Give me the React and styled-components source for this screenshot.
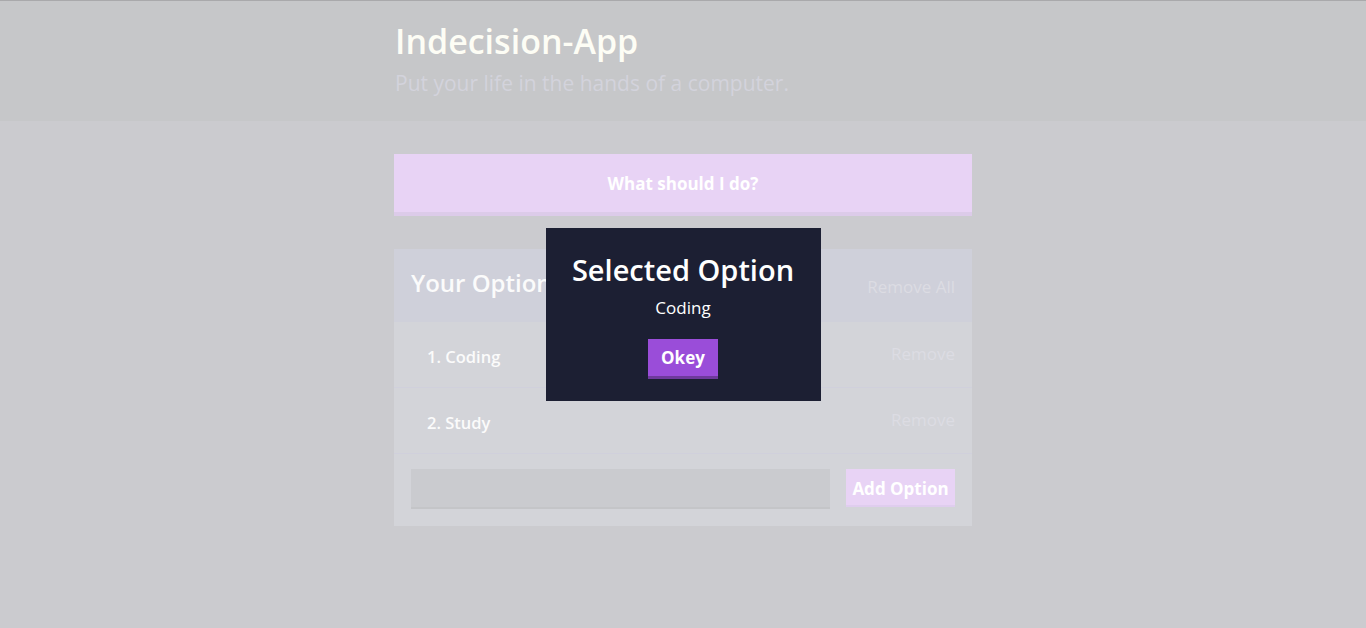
import React from "react";
import styled, { createGlobalStyle } from "styled-components";

const GlobalStyle = createGlobalStyle`
  html, body {
    margin: 0;
    padding: 0;
  }
  body {
    font-family: "Open Sans", "Noto Sans", sans-serif;
    background: #cbcbcf;
    border-top: 1px solid #a9a9ab;
  }
`;

const Page = styled.div`
  min-height: calc(100vh - 1px);
  background: #cbcbcf;
`;

const Container = styled.div`
  width: 578px;
  margin: 0 auto;
`;

const Header = styled.header`
  background: #c6c7c9;
  padding: 20px 0 25px;
`;

const Title = styled.h1`
  margin: 0 0 10px;
  font-size: 34px;
  line-height: 40px;
  font-weight: 600;
  color: #fdfdf5;
  padding-left: 1px;
`;

const Subtitle = styled.h2`
  margin: 0;
  font-size: 21px;
  line-height: 25px;
  font-weight: 500;
  color: #d3d3dc;
  padding-left: 1px;
`;

const Main = styled.main`
  padding-top: 33px;
`;

const BigButton = styled.button`
  display: block;
  width: 100%;
  height: 62px;
  margin-bottom: 33px;
  border: none;
  border-bottom: 4px solid #dccbe9;
  background: #e8d3f5;
  color: #ffffff;
  font-family: inherit;
  font-size: 17px;
  font-weight: 700;
`;

const Widget = styled.section`
  background: #d3d4d9;
`;

const WidgetHeader = styled.div`
  display: flex;
  align-items: center;
  justify-content: space-between;
  height: 73px;
  padding: 0 17px;
  background: #cfd0da;
`;

const WidgetTitle = styled.h3`
  margin: 0 0 6px;
  font-size: 24px;
  font-weight: 600;
  color: #fbfbfb;
`;

const LinkButton = styled.button`
  border: none;
  background: none;
  padding: 0;
  font-family: inherit;
  font-size: 17px;
  color: #dcdce3;
  margin-top: ${(p) => p.offset || 0}px;
`;

const OptionRow = styled.div`
  display: flex;
  align-items: center;
  justify-content: space-between;
  height: 65px;
  padding: 0 17px 0 33px;
  border-bottom: 1px solid #d0d0dc;
`;

const OptionText = styled.p`
  margin: 0;
  font-size: 16.5px;
  font-weight: 600;
  color: #fbfbfb;
  padding-top: 4px;
`;

const Form = styled.form`
  display: flex;
  gap: 16px;
  padding: 15px 17px 17px;
`;

const Input = styled.input`
  flex: 1;
  height: 40px;
  box-sizing: border-box;
  border: none;
  border-bottom: 2px solid #c4c5c8;
  background: #cacbcf;
  outline: none;
`;

const AddButton = styled.button`
  width: 109px;
  height: 38px;
  border: none;
  border-bottom: 2px solid #dfcdee;
  background: #e8d3f5;
  color: #ffffff;
  font-family: inherit;
  font-size: 17px;
  font-weight: 700;
  padding: 2px 0 0;
`;

const Overlay = styled.div`
  position: fixed;
  inset: 0;
  display: flex;
  align-items: center;
  justify-content: center;
`;

const Modal = styled.div`
  width: 275px;
  height: 173px;
  box-sizing: border-box;
  background: #1c1f33;
  padding-top: 22px;
  text-align: center;
  color: #ffffff;
`;

const ModalTitle = styled.h3`
  margin: 0;
  font-size: 29px;
  line-height: 40px;
  font-weight: 600;
`;

const ModalBody = styled.p`
  margin: 0 0 19px;
  font-size: 17px;
  line-height: 24px;
  padding-top: 6px;
`;

const OkButton = styled.button`
  width: 70px;
  height: 40px;
  border: none;
  border-bottom: 3px solid #6e3a9c;
  background: #9a4dd9;
  color: #ffffff;
  font-family: inherit;
  font-size: 17px;
  font-weight: 700;
  padding: 0;
`;

const options = ["Coding", "Study"];

const App = () => (
  <Page>
    <GlobalStyle />
    <Header>
      <Container>
        <Title>Indecision-App</Title>
        <Subtitle>Put your life in the hands of a computer.</Subtitle>
      </Container>
    </Header>
    <Main>
      <Container>
        <BigButton>What should I do?</BigButton>
        <Widget>
          <WidgetHeader>
            <WidgetTitle>Your Options</WidgetTitle>
            <LinkButton offset={1}>Remove All</LinkButton>
          </WidgetHeader>
          {options.map((o, i) => (
            <OptionRow key={o}>
              <OptionText>
                {i + 1}. {o}
              </OptionText>
              <LinkButton offset={-2}>Remove</LinkButton>
            </OptionRow>
          ))}
          <Form onSubmit={(e) => e.preventDefault()}>
            <Input type="text" name="option" />
            <AddButton>Add Option</AddButton>
          </Form>
        </Widget>
      </Container>
    </Main>
    <Overlay>
      <Modal>
        <ModalTitle>Selected Option</ModalTitle>
        <ModalBody>Coding</ModalBody>
        <OkButton>Okey</OkButton>
      </Modal>
    </Overlay>
  </Page>
);

export default App;
